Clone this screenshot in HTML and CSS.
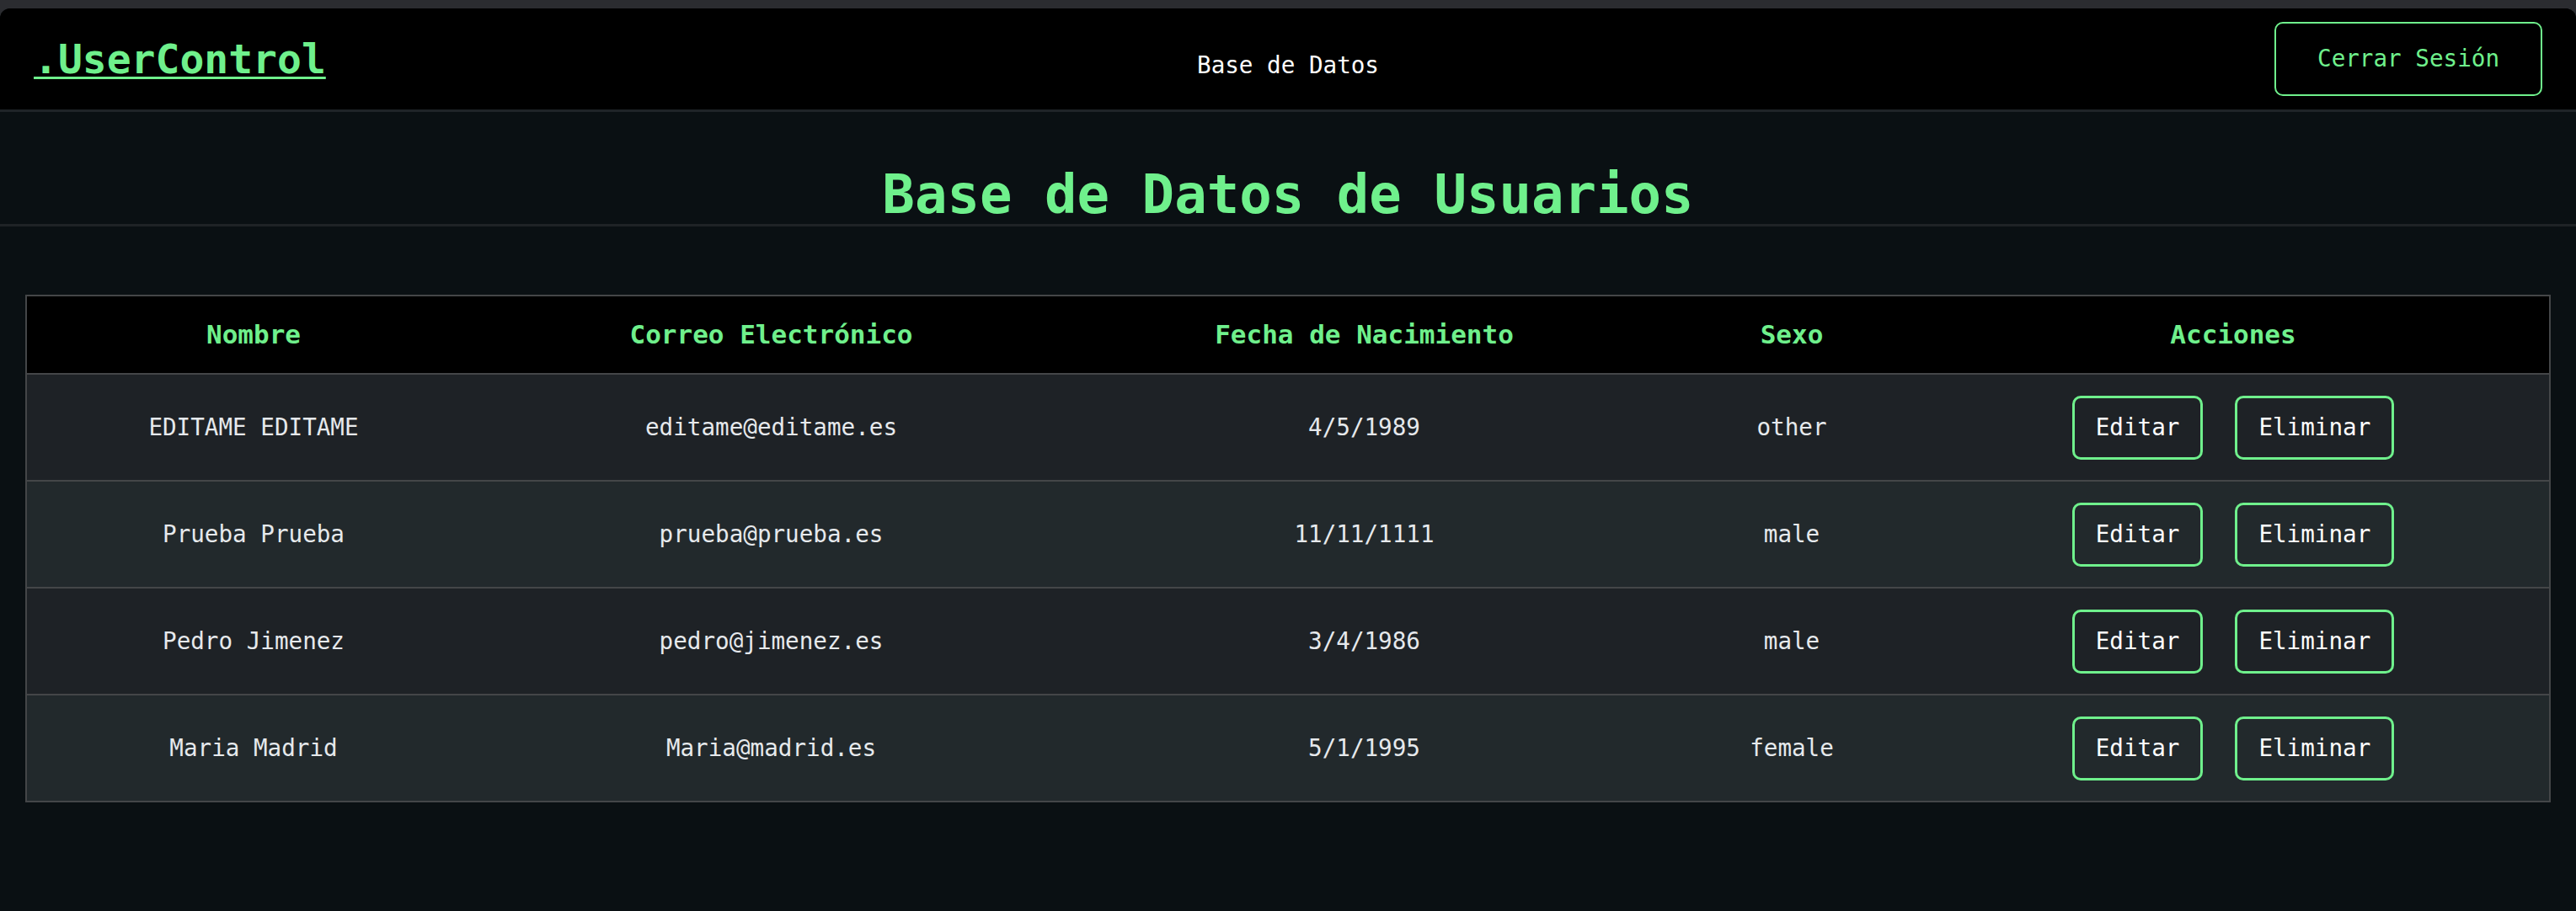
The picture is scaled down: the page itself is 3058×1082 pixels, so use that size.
FILE: index.html
```html
<!DOCTYPE html>
<html lang="es">
<head>
<meta charset="utf-8">
<title>UserControl - Base de Datos</title>
<link rel="stylesheet" href="styles.css">
</head>
<body>
<div class="window">
  <header class="navbar">
    <div class="nav-left"><a class="logo" href="#">.UserControl</a></div>
    <nav class="nav-center"><a class="nav-link" href="#">Base de Datos</a></nav>
    <div class="nav-right"><button class="btn-logout" type="button">Cerrar Sesión</button></div>
  </header>
  <main class="content">
    <h1 class="page-title">Base de Datos de Usuarios</h1>
    <div class="table-wrap">
      <table class="users">
        <colgroup>
          <col class="c-name">
          <col class="c-mail">
          <col class="c-date">
          <col class="c-sex">
          <col class="c-act">
        </colgroup>
        <thead>
          <tr>
            <th>Nombre</th>
            <th>Correo Electrónico</th>
            <th>Fecha de Nacimiento</th>
            <th>Sexo</th>
            <th>Acciones</th>
          </tr>
        </thead>
        <tbody>
          <tr>
            <td>EDITAME EDITAME</td>
            <td>editame@editame.es</td>
            <td>4/5/1989</td>
            <td>other</td>
            <td><div class="actions"><button class="btn-act" type="button">Editar</button><button class="btn-act" type="button">Eliminar</button></div></td>
          </tr>
          <tr>
            <td>Prueba Prueba</td>
            <td>prueba@prueba.es</td>
            <td>11/11/1111</td>
            <td>male</td>
            <td><div class="actions"><button class="btn-act" type="button">Editar</button><button class="btn-act" type="button">Eliminar</button></div></td>
          </tr>
          <tr>
            <td>Pedro Jimenez</td>
            <td>pedro@jimenez.es</td>
            <td>3/4/1986</td>
            <td>male</td>
            <td><div class="actions"><button class="btn-act" type="button">Editar</button><button class="btn-act" type="button">Eliminar</button></div></td>
          </tr>
          <tr>
            <td>Maria Madrid</td>
            <td>Maria@madrid.es</td>
            <td>5/1/1995</td>
            <td>female</td>
            <td><div class="actions"><button class="btn-act" type="button">Editar</button><button class="btn-act" type="button">Eliminar</button></div></td>
          </tr>
        </tbody>
      </table>
    </div>
  </main>
</div>
</body>
</html>
```

FILE: styles.css
```css
* {
  box-sizing: border-box;
}

html, body {
  margin: 0;
  padding: 0;
}

body {
  background: #2b2c30;
  padding-top: 10px;
  font-family: "DejaVu Sans Mono", "Liberation Mono", monospace;
  color: #e6e9ec;
}

.window {
  min-height: calc(100vh - 10px);
  background: #0a1013;
  border-radius: 12px 12px 0 0;
  overflow: hidden;
}

/* ---------- navbar ---------- */
.navbar {
  height: 123px;
  background: #000;
  border-bottom: 3px solid #1f2428;
  padding: 0 40px;
  display: grid;
  grid-template-columns: 1fr auto 1fr;
  align-items: center;
}

.nav-left {
  display: flex;
  align-items: center;
}

.logo {
  font-size: 48px;
  line-height: 56px;
  font-weight: 700;
  color: #6ff08c;
  text-decoration: underline;
  text-decoration-thickness: 3px;
  text-underline-offset: 4px;
}

.nav-center {
  padding-top: 15px;
}

.nav-link {
  font-size: 27.6px;
  line-height: 34px;
  color: #ffffff;
  text-decoration: none;
}

.nav-right {
  display: flex;
  justify-content: flex-end;
}

.btn-logout {
  height: 88px;
  padding: 0 49px;
  background: transparent;
  border: 2px solid #6ff08c;
  border-radius: 10px;
  color: #6ff08c;
  font-family: inherit;
  font-size: 27.6px;
  line-height: 1;
}

/* ---------- content ---------- */
.page-title {
  margin: 66px 0 81px;
  padding-bottom: 3px;
  border-bottom: 3px solid #1f2326;
  text-align: center;
  font-size: 64px;
  line-height: 64px;
  font-weight: 700;
  color: #6ff08c;
}

.table-wrap {
  padding: 0 30px;
}

.users {
  width: 100%;
  table-layout: fixed;
  border-collapse: separate;
  border-spacing: 0;
  border: 2px solid #444648;
}

.c-name { width: 538px; }
.c-mail { width: 691px; }
.c-date { width: 717px; }
.c-sex  { width: 298px; }
.c-act  { width: 750px; }

.users th {
  background: #000;
  color: #6ff08c;
  font-size: 31px;
  font-weight: 700;
  line-height: 91px;
  padding: 0;
  text-align: center;
  border-bottom: 2px solid #444648;
}

.users td {
  font-size: 27.6px;
  line-height: 125px;
  padding: 0;
  text-align: center;
  vertical-align: middle;
  color: #e6e9ec;
  border-bottom: 2px solid #444648;
}

.users tbody tr:nth-child(odd) {
  background: #1e2226;
}

.users tbody tr:nth-child(even) {
  background: #22292c;
}

.users tbody tr:last-child td {
  border-bottom: 0;
}

.actions {
  display: flex;
  justify-content: center;
  align-items: center;
  gap: 38px;
  height: 125px;
}

.btn-act {
  height: 76px;
  padding: 0 25px;
  background: transparent;
  border: 3px solid #6ff08c;
  border-radius: 10px;
  color: #ffffff;
  font-family: inherit;
  font-size: 27.6px;
  line-height: 1;
}
```
